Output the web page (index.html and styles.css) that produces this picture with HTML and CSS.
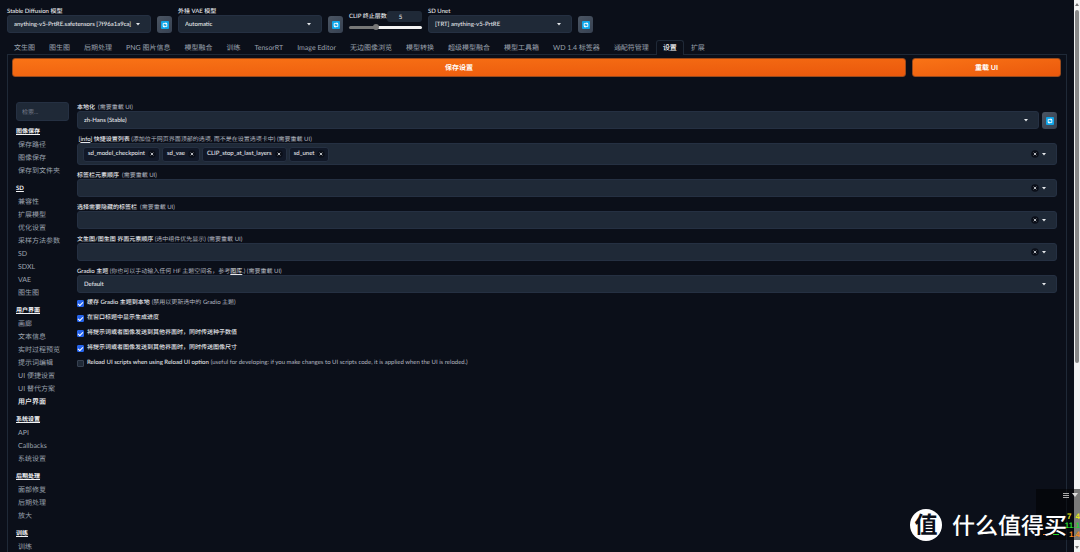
FILE: index.html
```html
<!DOCTYPE html>
<html lang="zh-Hans">
<head>
<meta charset="utf-8">
<title>Stable Diffusion</title>
<link rel="stylesheet" href="styles.css">
</head>
<body>
<svg class="defs" aria-hidden="true">
  <symbol id="caret" viewBox="0 0 6 4"><path d="M1 1h4L3 3.4z" fill="currentColor"/></symbol>
  <symbol id="refresh" viewBox="0 0 10 10"><rect x="1" y="1" width="8" height="8" rx="1" fill="#0ea5e9"/><path d="M3.2 6V3.4h3.2M6.8 4v2.6H3.6" fill="none" stroke="#fff" stroke-width=".9"/><path d="M5.6 2.2l1.8 1.2-1.8 1.3zM4.4 5.3L2.6 6.6l1.8 1.2z" fill="#fff"/></symbol>
  <symbol id="cross" viewBox="0 0 8 8"><circle cx="4" cy="4" r="3.8" fill="#0b0f19"/><path d="M2.7 2.7l2.6 2.6M5.3 2.7L2.7 5.3" stroke="#e5e7eb" stroke-width=".8"/></symbol>
</svg>
<div class="app">
  <header class="quick">
    <div class="field"><label for="model">Stable Diffusion 模型</label><div class="box"><input id="model" value="anything-v5-PrtRE.safetensors [7f96a1a9ca]"><svg class="caret"><use href="#caret"/></svg></div></div>
    <button class="tool" aria-label="刷新模型"><svg><use href="#refresh"/></svg></button>
    <div class="field"><label for="vae">外挂 VAE 模型</label><div class="box"><input id="vae" value="Automatic"><svg class="caret"><use href="#caret"/></svg></div></div>
    <button class="tool" aria-label="刷新 VAE"><svg><use href="#refresh"/></svg></button>
    <div class="clip"><div class="clip-top"><label for="clip">CLIP 终止层数</label><input id="clip" class="num" value="5"></div><input class="range" type="range" min="1" max="12" value="5" aria-label="CLIP 终止层数"></div>
    <div class="field"><label for="unet">SD Unet</label><div class="box"><input id="unet" value="[TRT] anything-v5-PrtRE"><svg class="caret"><use href="#caret"/></svg></div></div>
    <button class="tool" aria-label="刷新 Unet"><svg><use href="#refresh"/></svg></button>
  </header>
  <nav class="tabs">
    <button>文生图</button><button>图生图</button><button>后期处理</button><button>PNG 图片信息</button><button>模型融合</button><button>训练</button><button>TensorRT</button><button>Image Editor</button><button>无边图像浏览</button><button>模型转换</button><button>超级模型融合</button><button>模型工具箱</button><button>WD 1.4 标签器</button><button>通配符管理</button><button class="active">设置</button><button>扩展</button>
  </nav>
  <main class="panel">
    <div class="actions"><button class="primary save">保存设置</button><button class="primary reload">重载 UI</button></div>
    <div class="settings">
      <aside class="side">
        <input class="search" placeholder="检索..." aria-label="检索">
        <h2>图像保存</h2><button>保存路径</button><button>图像保存</button><button>保存到文件夹</button>
        <h2>SD</h2><button>兼容性</button><button>扩展模型</button><button>优化设置</button><button>采样方法参数</button><button>SD</button><button>SDXL</button><button>VAE</button><button>图生图</button>
        <h2>用户界面</h2><button>画廊</button><button>文本信息</button><button>实时过程预览</button><button>提示词编辑</button><button>UI 便捷设置</button><button>UI 替代方案</button><button class="on">用户界面</button>
        <h2>系统设置</h2><button>API</button><button>Callbacks</button><button>系统设置</button>
        <h2>后期处理</h2><button>面部修复</button><button>后期处理</button><button>放大</button>
        <h2>训练</h2><button>训练</button>
      </aside>
      <section class="form">
        <div class="row">
          <div class="field"><label for="loc">本地化 <span>&nbsp;(需要重载 UI)</span></label><div class="box"><input id="loc" value="zh-Hans (Stable)"><svg class="caret"><use href="#caret"/></svg></div></div>
          <button class="tool" aria-label="刷新本地化"><svg><use href="#refresh"/></svg></button>
        </div>
        <div class="field"><div class="label">&nbsp;[<a href="#">info</a>] 快捷设置列表 <span>(添加位于网页界面顶部的选项, 而不是在设置选项卡中) (需要重载 UI)</span></div>
          <div class="box multi tokens"><span class="token">sd_model_checkpoint<button aria-label="移除"><svg><use href="#cross"/></svg></button></span><span class="token">sd_vae<button aria-label="移除"><svg><use href="#cross"/></svg></button></span><span class="token">CLIP_stop_at_last_layers<button aria-label="移除"><svg><use href="#cross"/></svg></button></span><span class="token">sd_unet<button aria-label="移除"><svg><use href="#cross"/></svg></button></span><input aria-label="快捷设置列表"><button class="clear" aria-label="清空"><svg><use href="#cross"/></svg></button><svg class="caret"><use href="#caret"/></svg></div></div>
        <div class="field"><label for="order">标签栏元素顺序 <span>&nbsp;(需要重载 UI)</span></label><div class="box multi"><input id="order"><button class="clear" aria-label="清空"><svg><use href="#cross"/></svg></button><svg class="caret"><use href="#caret"/></svg></div></div>
        <div class="field"><label for="hide">选择需要隐藏的标签栏 <span>&nbsp;(需要重载 UI)</span></label><div class="box multi"><input id="hide"><button class="clear" aria-label="清空"><svg><use href="#cross"/></svg></button><svg class="caret"><use href="#caret"/></svg></div></div>
        <div class="field"><label for="ui">文生图/图生图 界面元素顺序 <span>(选中组件优先显示) (需要重载 UI)</span></label><div class="box multi"><input id="ui"><button class="clear" aria-label="清空"><svg><use href="#cross"/></svg></button><svg class="caret"><use href="#caret"/></svg></div></div>
        <div class="field"><label for="theme">Gradio 主题 <span>(你也可以手动输入任何 HF 主题空间名，参考<a href="#">图库</a>.) (需要重载 UI)</span></label><div class="box multi"><input id="theme" value="Default"><svg class="caret"><use href="#caret"/></svg></div></div>
        <div class="checks">
          <label><input type="checkbox" checked>缓存 Gradio 主题到本地<span>(禁用以更新选中的 Gradio 主题)</span></label>
          <label><input type="checkbox" checked>在窗口标题中显示生成进度</label>
          <label><input type="checkbox" checked>将提示词或者图像发送到其他界面时，同时传送种子数值</label>
          <label><input type="checkbox" checked>将提示词或者图像发送到其他界面时，同时传送图像尺寸</label>
          <label><input type="checkbox">Reload UI scripts when using Reload UI option<span>(useful for developing: if you make changes to UI scripts code, it is applied when the UI is reloded.)</span></label>
        </div>
      </section>
    </div>
  </main>
</div>
<div class="scroll"><i class="up"></i><i class="thumb"></i><i class="down"></i></div>
<div class="widget"><div class="w-top"><i class="menu"></i><i class="tri"></i></div><div class="w-line yellow"><span>7</span><span>4</span></div><div class="w-line green">11.1</div><div class="w-line orange"><i class="dash"></i><i class="dash g"></i>1.4</div></div>
<div class="mark"><span class="logo">值</span><span>什么值得买</span></div>
</body>
</html>
```
FILE: styles.css
```css
* { box-sizing: border-box; }
html { background: #0b0f19; height: 100%; }
body { margin: 0; height: 100vh; overflow: hidden; position: relative; background: #0b0f19; color: #e5e7eb; font: 500 6px/8px Lato, "Noto Sans CJK SC", sans-serif; text-rendering: geometricPrecision; }
button, input { font: inherit; color: inherit; margin: 0; padding: 0; border: 0; background: none; text-rendering: inherit; }
input { min-width: 0; outline: 0; }
a { color: #e5e7eb; text-decoration: underline; }
.defs { position: absolute; width: 0; height: 0; }
.app { padding: 6px 13px 0 7px; }
.quick { display: flex; align-items: flex-end; gap: 6px; height: 27px; }
.field { display: flex; flex-direction: column; gap: 1px; flex: 1; }
.field label, .label { white-space: nowrap; height: 8px; line-height: 12px; }
.field label span, .label span, .checks span { font-weight: 400; color: #b4b8c0; }
.quick .field { flex: 0 0 144px; }
.box { display: flex; align-items: center; height: 18px; padding: 0 9px 0 6px; background: #1f2937; border: 1px solid #253042; border-radius: 3px; }
.box > input { flex: 1; padding-top: 2px; }
.caret { width: 6px; height: 4px; flex: none; }
.tool { width: 15px; height: 17px; flex: none; display: grid; place-items: center; border-radius: 3px; background: linear-gradient(135deg, #4b5563, #374151); }
.tool svg { width: 10px; height: 10px; }
.clip { width: 73px; height: 22px; display: flex; flex-direction: column; justify-content: space-between; }
.clip-top { display: flex; height: 11px; align-items: center; white-space: nowrap; }
.num { width: 36px; height: 11px; margin-left: auto; text-align: center; padding: 2px 8px 0 0; background: #1f2937; border-radius: 3px; }
.range { appearance: none; width: 100%; height: 7px; margin-bottom: 2px; }
.range::-webkit-slider-runnable-track { height: 3px; border-radius: 2px; background: linear-gradient(90deg, #777 38%, #f3f3f3 38%); }
.range::-webkit-slider-thumb { appearance: none; width: 6px; height: 6px; margin-top: -2px; border-radius: 50%; background: #777; }
.tabs { display: flex; margin-top: 7px; height: 14px; position: relative; }
.tabs button { padding: 0 6px 1px; height: 15px; border: 1px solid transparent; border-bottom: 0; font-weight: 400; font-size: 7px; color: #9ca3af; white-space: nowrap; }
.tabs .active { color: #fff; font-weight: 500; background: #0b0f19; border-color: #1f2937; border-radius: 3px 3px 0 0; }
.panel { border: 1px solid #1f2937; border-bottom: 0; padding: 3px 5px 0 4px; height: calc(100vh - 54px); overflow: hidden; }
.actions { display: grid; grid-template-columns: 6fr 1fr; gap: 6px; }
.primary { height: 19px; border: 1px solid #9a4a1c; border-radius: 3px; background: linear-gradient(to bottom right, #f97316, #ea580c); color: #fff; font-size: 7px; font-weight: 700; }
.settings { display: flex; gap: 8px; padding: 25px 4px 0; }
.side { width: 53px; flex: none; display: flex; flex-direction: column; align-items: stretch; }
.search { height: 19px; padding: 2px 5px 0; background: #1f2937; border: 1px solid #253042; border-radius: 3px; }
.search::placeholder { color: #6b7280; }
.side h2 { margin: 5px 0 2px; font-size: 6px; line-height: 11px; height: 11px; font-weight: 700; text-decoration: underline; color: #f3f4f6; }
.side button { height: 13px; line-height: 13px; padding-left: 2px; text-align: left; font-size: 7px; font-weight: 400; color: #9ca3af; white-space: nowrap; }
.side .on { color: #f3f4f6; font-weight: 500; }
.form { flex: 1; min-width: 0; display: flex; flex-direction: column; gap: 5px; }
.form .field { flex: none; }
.row { display: flex; align-items: flex-end; gap: 3px; }
.form .row .field { flex: 1; }
.tokens.box { height: 22px; gap: 2px; padding-left: 5px; }
.token { display: flex; align-items: center; gap: 3px; height: 15px; padding: 0 3px 0 4px; border: 1px solid #253042; border-radius: 3px; background: #111827; line-height: 10px; }
.token button, .clear { width: 8px; height: 8px; flex: none; display: grid; }
.token svg, .clear svg { width: 8px; height: 8px; }
.clear { margin-right: 2px; }
.tokens .clear { margin-right: 0; }
.checks { display: flex; flex-direction: column; gap: 7px; padding-top: 1px; }
.checks label { display: flex; align-items: center; gap: 2px; height: 8px; white-space: nowrap; }
.checks input { appearance: none; width: 7px; height: 7px; margin-right: 1px; border: 1px solid #374151; border-radius: 1px; background: #1f2937; display: grid; place-items: center; }
.checks input:checked { background: #2563eb; border-color: #2563eb; }
.checks input:checked::after { content: ""; width: 2px; height: 4px; border: solid #fff; border-width: 0 1px 1px 0; transform: rotate(45deg); }
.scroll { position: absolute; right: 0; top: 0; bottom: 0; width: 6px; background: #f4f4f4; display: flex; flex-direction: column; align-items: center; }
.up { border: 2px solid transparent; border-top: 0; border-bottom: 3px solid #777; margin: 3px 0 4px; }
.thumb { width: 4px; height: 64%; border-radius: 2px; background: #8b8b8b; }
.down { border: 2px solid transparent; border-bottom: 0; border-top: 3px solid #777; margin: auto 0 3px; }
.widget { position: absolute; right: 0; bottom: 12px; width: 44px; height: 51px; padding: 4px 0 0; background: rgba(0, 0, 0, .5); overflow: hidden; }
.w-top { display: flex; justify-content: flex-end; gap: 3px; height: 19px; padding-right: 2px; }
.menu { width: 6px; height: 5px; border: solid #aaa; border-width: 1px 0; background: linear-gradient(transparent 1px, #aaa 1px 2px, transparent 2px); }
.tri { border: 3px solid transparent; border-top: 4px solid #ddd; border-bottom: 0; height: 4px; }
.w-line { font: 700 8px/9px "Liberation Sans", sans-serif; white-space: nowrap; display: flex; justify-content: flex-end; align-items: center; }
.yellow { color: #e5e51b; gap: 4px; }
.green { color: #23d52b; }
.orange { color: #f08a24; gap: 4px; }
.dash { width: 6px; height: 1px; background: #d8791d; }
.dash.g { background: #23d52b; margin-right: 6px; }
.mark { position: absolute; right: 13px; bottom: 10px; display: flex; align-items: center; gap: 10px; color: #fff; font-size: 23px; line-height: 34px; white-space: nowrap; }
.logo { width: 32px; height: 32px; line-height: 31px; border-radius: 50%; background: #fff; color: #0b0f19; text-align: center; font-weight: 700; }
```
